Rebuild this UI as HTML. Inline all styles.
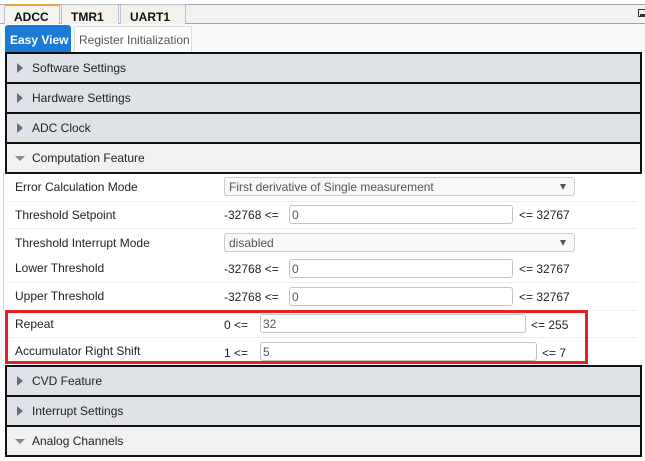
<!DOCTYPE html>
<html><head><style>
*{margin:0;padding:0;box-sizing:border-box}
body{width:645px;height:461px;background:#fff;position:relative;overflow:hidden;font-family:"Liberation Sans",sans-serif;font-size:12px;color:#222}
.a{position:absolute}
.tab{position:absolute;top:4px;height:20px;border:1px solid #b8c2cc;border-bottom:none;background:#f3f1ea;font-weight:bold;font-size:12px;padding:5px 0 0 9px;color:#111;border-radius:2px 2px 0 0}
.hdr{position:absolute;left:5px;width:637px;height:32px;background:#dfe2e6;border:2px solid #111;font-size:12px;padding:7px 0 0 25px}
.hdr.open{background:#f1f1f1}
.tri{position:absolute;left:10px;top:9px;width:0;height:0;border-top:5px solid transparent;border-bottom:5px solid transparent;border-left:6px solid #6a6a8a}
.down{position:absolute;left:8px;top:12px;width:0;height:0;border-left:5px solid transparent;border-right:5px solid transparent;border-top:5px solid #888}
.lbl{position:absolute;left:15px;font-size:12px}
.inp{position:absolute;height:19px;border:1px solid #c4c4c4;border-radius:3px;background:#fff;font-size:12px;padding:2px 0 0 2px;color:#555}
.sel{position:absolute;left:224px;width:351px;height:19px;border:1px solid #ccc;border-radius:3px;background:#f8f8f8;font-size:12px;padding:2px 0 0 4px;color:#555}
.sel:after{content:"";position:absolute;right:8px;top:6px;border-left:3px solid transparent;border-right:3px solid transparent;border-top:6px solid #555}
.sep{position:absolute;left:8px;width:629px;height:1px;background:#eee}
.t{position:absolute;font-size:12px}
</style></head><body>
<div class="a" style="left:0;top:4px;width:645px;height:20px;background:#f1f1f1;border-top:1px solid #9aa8b4;border-bottom:1px solid #9aa8b4"></div>
<div class="tab" style="left:4px;width:56px;background:#f6f4ee;border-top:2px solid #e8a040;padding-top:4px;height:21px">ADCC <span style="font-size:11px;margin-left:4px">×</span></div>
<div class="tab" style="left:61px;width:58px">TMR1</div>
<div class="tab" style="left:120px;width:66px">UART1</div>
<div class="a" style="left:638px;top:9px;width:8px;height:8px;border:1px solid #333"><div class="a" style="left:1px;top:4px;width:5px;height:2px;background:#333"></div></div>
<div class="a" style="left:0;top:24px;width:645px;height:29px;background:#f7f9fb"></div>
<div class="a" style="left:5px;top:25px;width:66px;height:28px;background:#1a7ad4;color:#fff;font-weight:bold;font-size:12px;padding:8px 0 0 5px;border-radius:3px 3px 0 0">Easy View</div>
<div class="a" style="left:74px;top:26px;width:118px;height:27px;background:#fff;border:1px solid #ddd;color:#555;font-size:12px;padding:6px 0 0 4px">Register Initialization</div>

<div class="hdr" style="top:52px"><div class="tri"></div>Software Settings</div>
<div class="hdr" style="top:82px"><div class="tri"></div>Hardware Settings</div>
<div class="hdr" style="top:112px"><div class="tri"></div>ADC Clock</div>
<div class="hdr open" style="top:142px"><div class="down"></div>Computation Feature</div>
<div class="a" style="left:3px;top:173px;width:1px;height:138px;background:#c8d2dc"></div>

<div class="lbl" style="top:180px">Error Calculation Mode</div>
<div class="sel" style="top:177px">First derivative of Single measurement</div>
<div class="sep" style="top:201px"></div>
<div class="lbl" style="top:208px">Threshold Setpoint</div>
<div class="t" style="left:224px;top:208px">-32768 &lt;=</div>
<div class="inp" style="left:289px;top:205px;width:224px">0</div>
<div class="t" style="left:519px;top:208px">&lt;= 32767</div>
<div class="sep" style="top:228px"></div>
<div class="lbl" style="top:236px">Threshold Interrupt Mode</div>
<div class="sel" style="top:233px">disabled</div>
<div class="lbl" style="top:261px">Lower Threshold</div>
<div class="t" style="left:224px;top:262px">-32768 &lt;=</div>
<div class="inp" style="left:289px;top:259px;width:224px">0</div>
<div class="t" style="left:519px;top:262px">&lt;= 32767</div>
<div class="sep" style="top:282px"></div>
<div class="lbl" style="top:289px">Upper Threshold</div>
<div class="t" style="left:224px;top:290px">-32768 &lt;=</div>
<div class="inp" style="left:289px;top:287px;width:224px">0</div>
<div class="t" style="left:519px;top:290px">&lt;= 32767</div>
<div class="sep" style="top:310px"></div>

<div class="lbl" style="top:317px">Repeat</div>
<div class="t" style="left:224px;top:318px">0 &lt;=</div>
<div class="inp" style="left:260px;top:314px;width:266px">32</div>
<div class="t" style="left:531px;top:318px">&lt;= 255</div>
<div class="sep" style="top:337px"></div>
<div class="lbl" style="top:344px">Accumulator Right Shift</div>
<div class="t" style="left:224px;top:346px">1 &lt;=</div>
<div class="inp" style="left:260px;top:342px;width:277px">5</div>
<div class="t" style="left:542px;top:346px">&lt;= 7</div>
<div class="a" style="left:5px;top:310px;width:583px;height:54px;border:3px solid #e8202a"></div>

<div class="hdr" style="top:365px"><div class="tri"></div>CVD Feature</div>
<div class="hdr" style="top:395px"><div class="tri"></div>Interrupt Settings</div>
<div class="hdr open" style="top:425px"><div class="down"></div>Analog Channels</div>
</body></html>
